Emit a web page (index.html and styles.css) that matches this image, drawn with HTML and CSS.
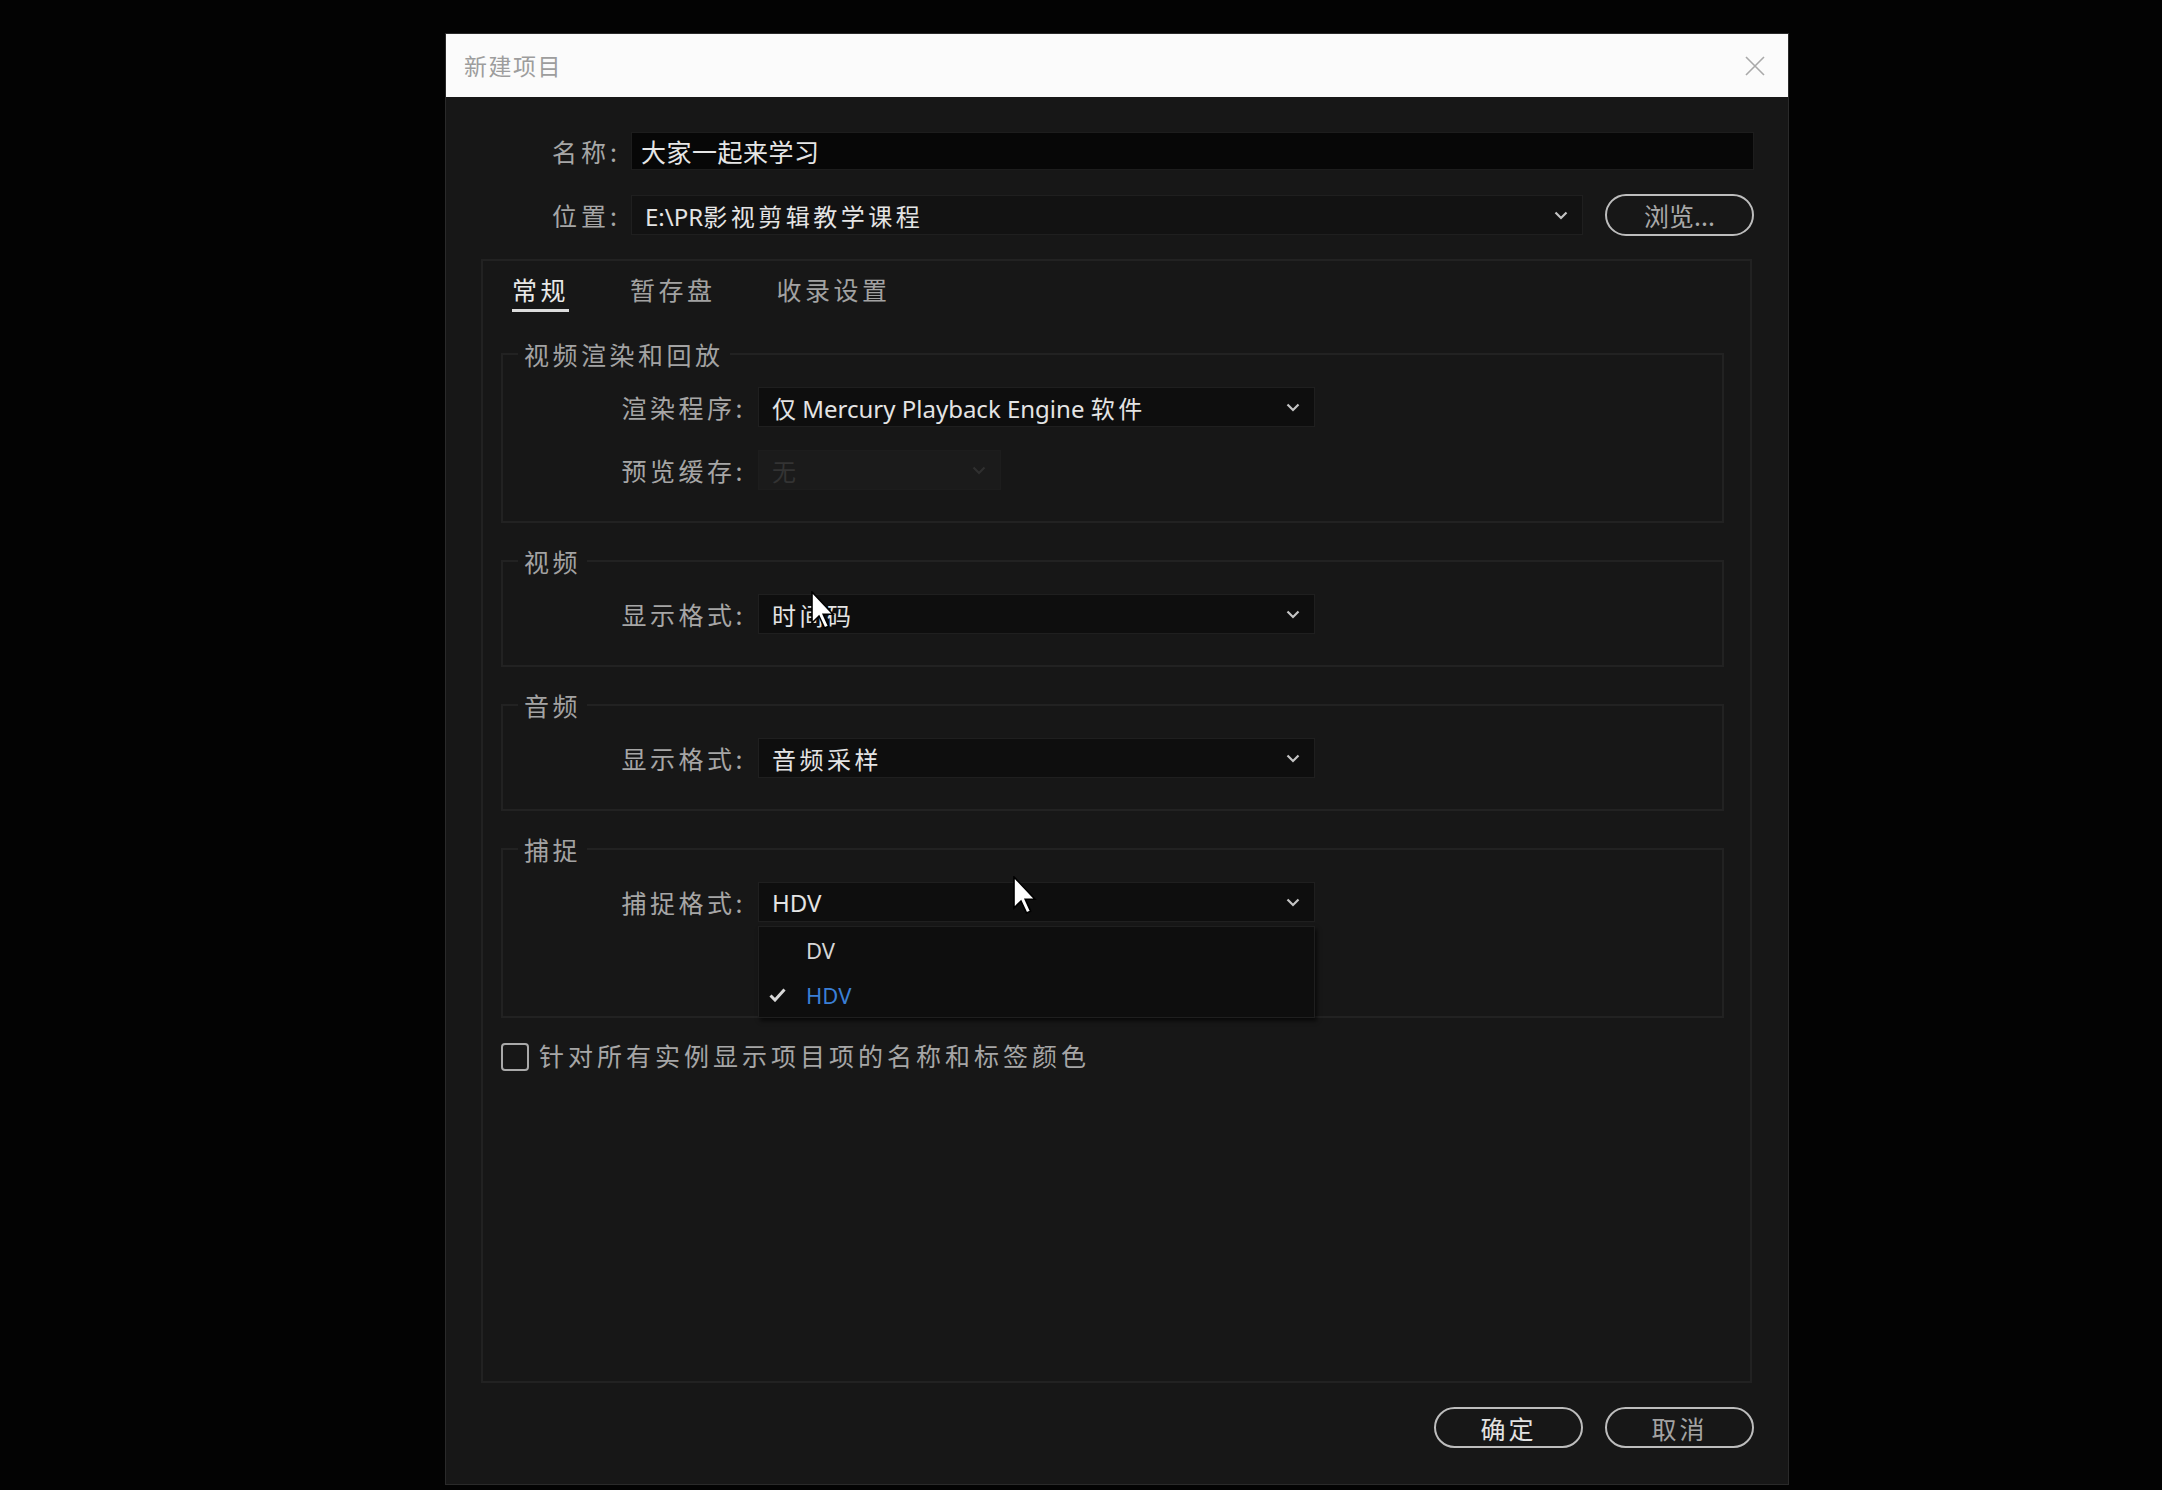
FILE: index.html
```html
<!DOCTYPE html>
<html lang="zh-CN">
<head>
<meta charset="utf-8">
<title>新建项目</title>
<link rel="stylesheet" href="styles.css">
</head>
<body>
<div class="dialog">
  <div class="titlebar">
    <span class="title">新建项目</span>
    <svg class="close" width="22" height="22" viewBox="0 0 22 22"><path d="M2 2 L20 20 M20 2 L2 20" stroke="#a9a9a9" stroke-width="1.6" fill="none"/></svg>
  </div>
  <div class="content">
    <div class="field-row">
      <span class="field-label">名称:</span>
      <div class="name-input">大家一起来学习</div>
    </div>
    <div class="field-row loc-row">
      <span class="field-label">位置:</span>
      <div class="select loc-select"><span class="val"><span class="latin">E:\PR</span>影视剪辑教学课程</span>
        <svg class="chev" width="14" height="9" viewBox="0 0 14 9"><path d="M1.5 1.5 L7 7 L12.5 1.5" stroke="#c4c4c4" stroke-width="2.2" fill="none"/></svg>
      </div>
      <div class="pill browse">浏览...</div>
    </div>

    <div class="panel">
      <div class="tabs">
        <span class="tab active">常规</span>
        <span class="tab">暂存盘</span>
        <span class="tab">收录设置</span>
      </div>

      <fieldset class="group">
        <legend>视频渲染和回放</legend>
        <div class="grow">
          <span class="glabel">渲染程序:</span>
          <div class="select wide"><span class="val"><span class="tight">仅</span><span class="latin"> Mercury Playback Engine </span>软件</span>
            <svg class="chev" width="14" height="9" viewBox="0 0 14 9"><path d="M1.5 1.5 L7 7 L12.5 1.5" stroke="#c4c4c4" stroke-width="2.2" fill="none"/></svg>
          </div>
        </div>
        <div class="grow">
          <span class="glabel">预览缓存:</span>
          <div class="select narrow disabled"><span class="val">无</span>
            <svg class="chev" width="14" height="9" viewBox="0 0 14 9"><path d="M1.5 1.5 L7 7 L12.5 1.5" stroke="#2f2f2f" stroke-width="2.2" fill="none"/></svg>
          </div>
        </div>
      </fieldset>

      <fieldset class="group">
        <legend>视频</legend>
        <div class="grow">
          <span class="glabel">显示格式:</span>
          <div class="select wide"><span class="val">时间码</span>
            <svg class="chev" width="14" height="9" viewBox="0 0 14 9"><path d="M1.5 1.5 L7 7 L12.5 1.5" stroke="#c4c4c4" stroke-width="2.2" fill="none"/></svg>
          </div>
        </div>
      </fieldset>

      <fieldset class="group">
        <legend>音频</legend>
        <div class="grow">
          <span class="glabel">显示格式:</span>
          <div class="select wide"><span class="val">音频采样</span>
            <svg class="chev" width="14" height="9" viewBox="0 0 14 9"><path d="M1.5 1.5 L7 7 L12.5 1.5" stroke="#c4c4c4" stroke-width="2.2" fill="none"/></svg>
          </div>
        </div>
      </fieldset>

      <fieldset class="group capture">
        <legend>捕捉</legend>
        <div class="grow">
          <span class="glabel">捕捉格式:</span>
          <div class="select wide"><span class="val latin">HDV</span>
            <svg class="chev" width="14" height="9" viewBox="0 0 14 9"><path d="M1.5 1.5 L7 7 L12.5 1.5" stroke="#c4c4c4" stroke-width="2.2" fill="none"/></svg>
            <div class="menu">
              <div class="menu-item"><span class="check"></span><span>DV</span></div>
              <div class="menu-item selected"><span class="check"><svg width="17" height="14" viewBox="0 0 17 14"><path d="M1.5 7.5 L6 12 L15.5 1.5" stroke="#d8d8d8" stroke-width="3" fill="none"/></svg></span><span>HDV</span></div>
            </div>
          </div>
        </div>
      </fieldset>

      <div class="check-row">
        <span class="checkbox"></span>
        <span class="check-label">针对所有实例显示项目项的名称和标签颜色</span>
      </div>
    </div>

    <div class="footer">
      <div class="pill ok">确定</div>
      <div class="pill cancel">取消</div>
    </div>
  </div>
</div>

<svg class="cursor cursor-a" width="24" height="38" viewBox="0 0 12 19"><path d="M0.5 0.5 L0.5 16 L4 12.5 L6.8 18.5 L8.8 17.6 L6.1 11.6 L11 11.6 Z" fill="#ffffff" stroke="#000" stroke-width="0.8"/></svg>
<svg class="cursor cursor-b" width="24" height="38" viewBox="0 0 12 19"><path d="M0.5 0.5 L0.5 16 L4 12.5 L6.8 18.5 L8.8 17.6 L6.1 11.6 L11 11.6 Z" fill="#ffffff" stroke="#000" stroke-width="0.8"/></svg>
</body>
</html>
```

FILE: styles.css
```css
html, body {
  margin: 0;
  padding: 0;
}
body {
  background: #030303;
  width: 2162px;
  height: 1490px;
  overflow: hidden;
  position: relative;
  padding-top: 33px;
  box-sizing: border-box;
  font-family: "Noto Sans CJK SC", "Noto Sans", sans-serif;
  color: #a8a8a8;
}
.latin {
  font-family: "Noto Sans", "Noto Sans CJK SC", sans-serif;
  letter-spacing: 0;
}
.tight {
  letter-spacing: 0;
}
.dialog {
  margin-left: 445px;
  width: 1344px;
  height: 1452px;
  box-sizing: border-box;
  background: #171717;
  border: 1px solid #2a2a2a;
  display: flex;
  flex-direction: column;
}
.titlebar {
  height: 63px;
  flex: none;
  background: #fbfbfb;
  display: flex;
  align-items: center;
  justify-content: space-between;
  padding: 0 22px 0 18px;
}
.title {
  font-size: 23px;
  letter-spacing: 1.5px;
  color: #9d9d9d;
  margin-top: -2px;
}
.content {
  flex: 1;
  display: flex;
  flex-direction: column;
  padding: 35px 34px 36px 35px;
  min-height: 0;
}
.field-row {
  display: flex;
  align-items: center;
  gap: 10px;
  font-size: 25px;
  letter-spacing: 4px;
}
.field-label {
  width: 140px;
  flex: none;
  text-align: right;
  color: #a6a6a6;
}
.name-input {
  flex: 1;
  height: 38px;
  box-sizing: border-box;
  background: #070707;
  border: 1px solid #1d1d1d;
  padding-left: 9px;
  display: flex;
  align-items: center;
  color: #e6e6e6;
  letter-spacing: 0.5px;
}
.loc-row {
  margin-top: 24px;
}
.select {
  position: relative;
  height: 40px;
  box-sizing: border-box;
  background: #0e0e0e;
  border: 1px solid #1f1f1f;
  display: flex;
  align-items: center;
  justify-content: space-between;
  padding: 0 14px 0 13px;
  color: #e4e4e4;
  font-size: 24px;
  letter-spacing: 3.5px;
}
.loc-select {
  flex: 1;
  background: #121212;
}
.chev {
  flex: none;
}
.pill {
  box-sizing: border-box;
  border: 2px solid #bdbdbd;
  border-radius: 22px;
  height: 42px;
  width: 149px;
  display: flex;
  align-items: center;
  justify-content: center;
  font-size: 25px;
  letter-spacing: 3px;
}
.browse {
  margin-left: 12px;
  color: #a9a9a9;
  letter-spacing: 0;
}
.panel {
  margin-top: 23px;
  flex: 1;
  border: 2px solid #222222;
  padding: 0 26px 0 18px;
  margin-right: 2px;
  display: flex;
  flex-direction: column;
}
.tabs {
  display: flex;
  gap: 61px;
  padding-top: 11px;
  margin-left: 11px;
  font-size: 25px;
  letter-spacing: 3.5px;
  line-height: 34px;
}
.tab {
  color: #a2a2a2;
  padding-bottom: 3px;
  border-bottom: 3px solid transparent;
}
.tab.active {
  color: #e8e8e8;
  border-bottom-color: #dcdcdc;
}
.group {
  margin: 25px 0 0 0;
  border: 2px solid #222222;
  padding: 16px 0 31px 0;
  min-width: 0;
}
.group + .group {
  margin-top: 21px;
}
.group legend {
  margin-left: 15px;
  padding: 0 6px;
  font-size: 25px;
  line-height: 34px;
  letter-spacing: 3.5px;
  color: #a3a3a3;
}
.group.capture {
  padding-bottom: 94px;
}
.grow {
  display: flex;
  align-items: center;
  gap: 12px;
}
.grow + .grow {
  margin-top: 23px;
}
.glabel {
  width: 243px;
  flex: none;
  text-align: right;
  font-size: 25px;
  letter-spacing: 3.5px;
  color: #a6a6a6;
}
.wide {
  width: 557px;
}
.narrow {
  width: 243px;
}
.select.disabled {
  background: #1b1b1b;
  border-color: #1d1d1d;
  color: #333333;
}
.menu {
  position: absolute;
  top: 43px;
  left: -1px;
  width: 557px;
  height: 92px;
  box-sizing: border-box;
  background: #0e0e0e;
  border: 1px solid #1f1f1f;
  box-shadow: 2px 3px 4px rgba(0, 0, 0, 0.6);
  z-index: 5;
  font-family: "Noto Sans", sans-serif;
  font-size: 22px;
  letter-spacing: 0;
}
.menu-item {
  height: 45px;
  display: flex;
  align-items: center;
  color: #d6d6d6;
}
.menu-item .check {
  width: 47px;
  flex: none;
  display: flex;
  justify-content: flex-start;
  padding-left: 10px;
  box-sizing: border-box;
}
.menu-item.selected {
  color: #3a7fd6;
}
.check-row {
  margin-top: 22px;
  display: flex;
  align-items: center;
}
.checkbox {
  width: 28px;
  height: 28px;
  box-sizing: border-box;
  border: 2px solid #a9a9a9;
  border-radius: 4px;
  flex: none;
}
.check-label {
  margin-left: 10px;
  font-size: 25px;
  letter-spacing: 4px;
  color: #a6a6a6;
  margin-top: -3px;
}
.footer {
  margin-top: 24px;
  display: flex;
  justify-content: flex-end;
  gap: 22px;
}
.footer .pill {
  height: 41px;
}
.ok {
  color: #e2e2e2;
}
.cancel {
  color: #a3a3a3;
}
.cursor {
  position: absolute;
  z-index: 10;
}
.cursor-a {
  left: 811px;
  top: 591px;
}
.cursor-b {
  left: 1013px;
  top: 876px;
}
```
